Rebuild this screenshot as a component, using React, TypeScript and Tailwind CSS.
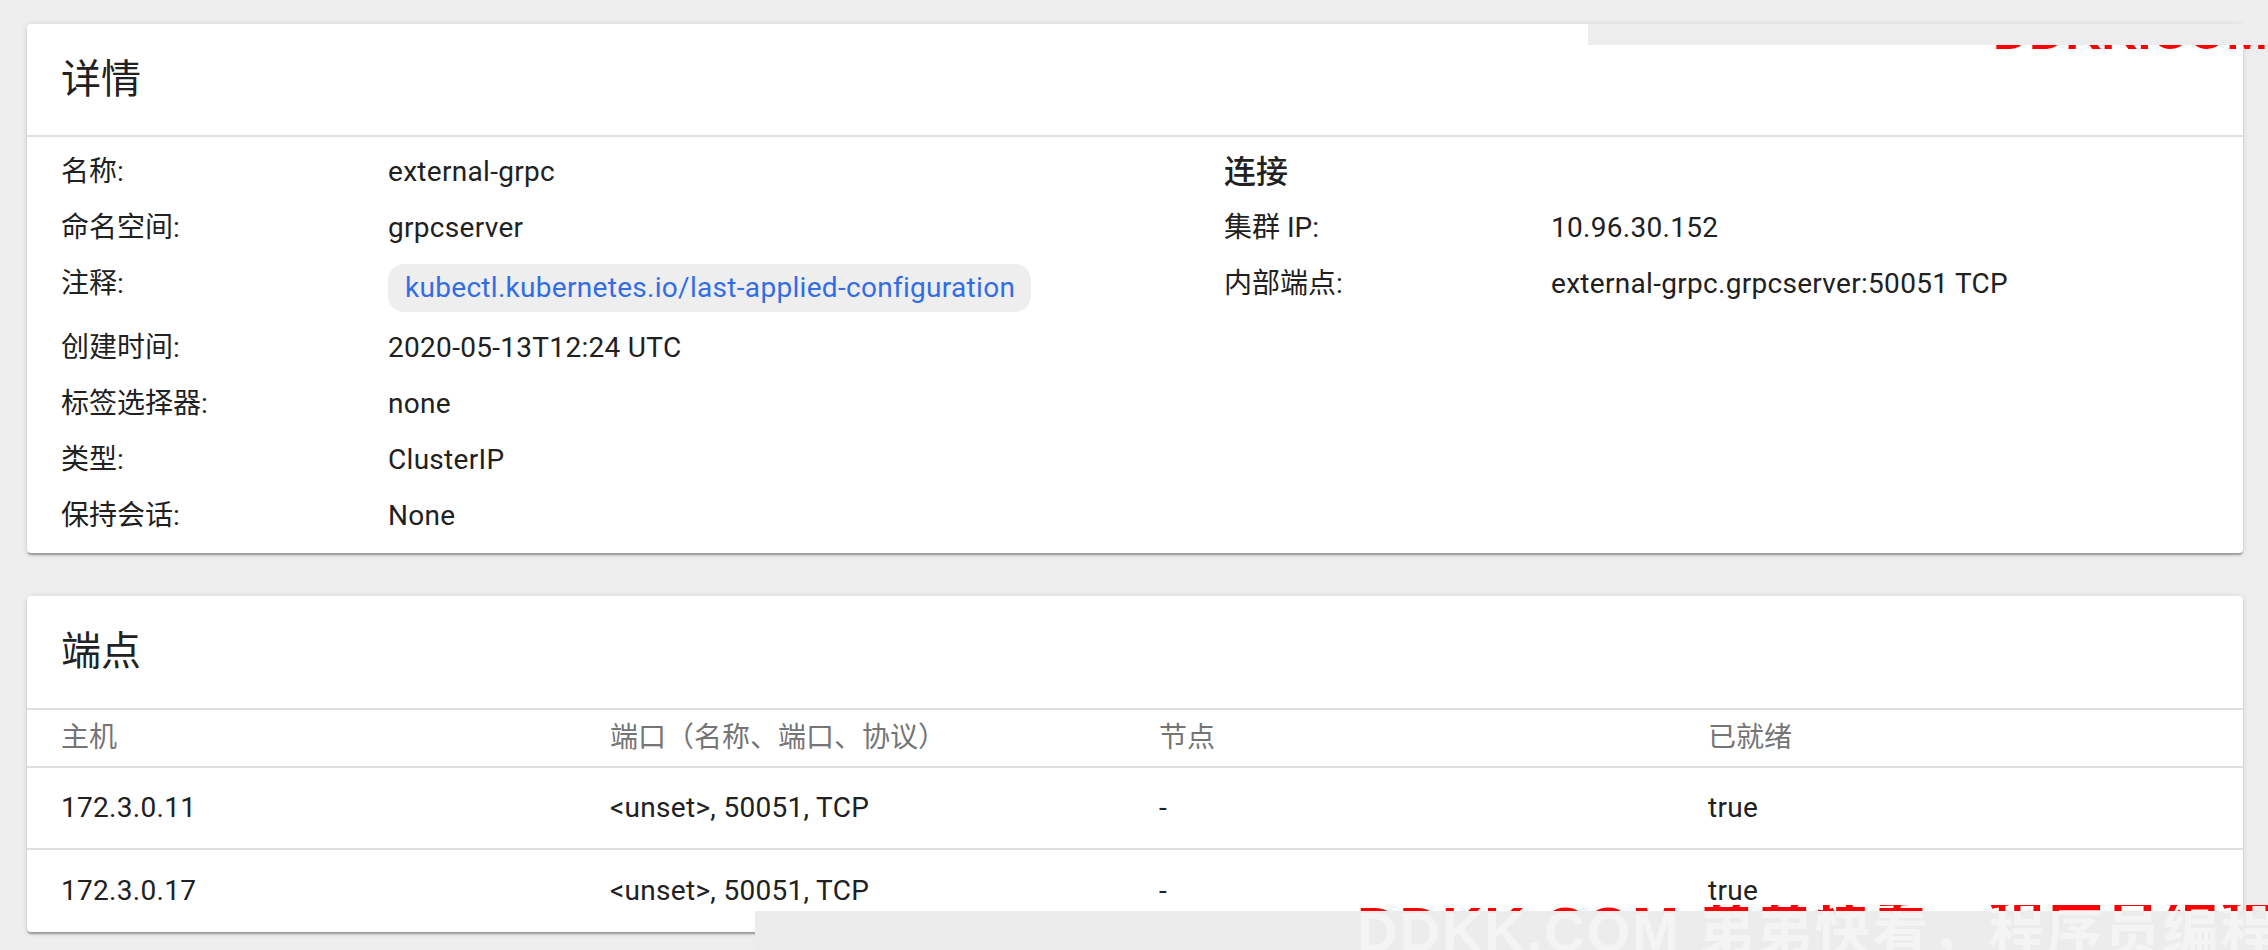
import React from "react";

const font = { fontFamily: "Roboto, 'Noto Sans CJK SC', 'Noto Sans', sans-serif" };

function Card({ title, headerH, children }: { title: string; headerH: string; children: React.ReactNode }) {
  return (
    <div className="bg-white rounded-[4px] shadow-[0_3px_2px_-1px_rgba(0,0,0,0.2),0_2px_2px_0_rgba(0,0,0,0.14),0_1px_6px_0_rgba(0,0,0,0.12)]">
      <div className={`${headerH} flex items-center pl-[34px] border-b-2 border-[#e0e0e0]`}>
        <span className="text-[40px] leading-[48px] text-[#212121]">{title}</span>
      </div>
      {children}
    </div>
  );
}

function Row({ label, children, labelW = "w-[327px]" }: { label: string; children: React.ReactNode; labelW?: string }) {
  return (
    <div className="flex items-start">
      <div className={`${labelW} shrink-0 text-[28px] leading-[40px] text-[#212121]`}>{label}</div>
      <div className="text-[28px] leading-[40px] tracking-[0.3px] text-[#212121]">{children}</div>
    </div>
  );
}

export default function App() {
  const headers = ["主机", "端口（名称、端口、协议）", "节点", "已就绪"];
  const rows = [
    ["172.3.0.11", "<unset>, 50051, TCP", "-", "true"],
    ["172.3.0.17", "<unset>, 50051, TCP", "-", "true"],
  ];
  return (
    <div className="relative h-[950px] overflow-hidden bg-[#eeeeee] pt-[24px] pl-[27px] pr-[25px]" style={font}>
      <div className="flex flex-col gap-[43px]">
        <Card title="详情" headerH="h-[113px]">
          <div className="flex pl-[34px] pt-[15px] pb-[17px]">
            <div className="w-[1163px] shrink-0 flex flex-col gap-[16px]">
              <Row label="名称:">external-grpc</Row>
              <Row label="命名空间:">grpcserver</Row>
              <Row label="注释:">
                <span className="inline-flex h-[48px] items-center rounded-[16px] bg-[#eeeeee] pl-[17px] pr-[16px] text-[#326de6]">
                  kubectl.kubernetes.io/last-applied-configuration
                </span>
              </Row>
              <Row label="创建时间:">2020-05-13T12:24 UTC</Row>
              <Row label="标签选择器:">none</Row>
              <Row label="类型:">ClusterIP</Row>
              <Row label="保持会话:">None</Row>
            </div>
            <div className="flex flex-col gap-[16px]">
              <div className="text-[32px] leading-[40px] font-medium text-[#212121]">连接</div>
              <Row label="集群 IP:">10.96.30.152</Row>
              <Row label="内部端点:">external-grpc.grpcserver:50051 TCP</Row>
            </div>
          </div>
        </Card>
        <Card title="端点" headerH="h-[114px]">
          <div className="grid grid-cols-[549px_549px_549px_1fr] h-[58px] items-center pl-[34px] border-b-2 border-[#e0e0e0]">
            {headers.map((h) => (
              <div key={h} className="text-[28px] leading-[40px] text-[#757575]">{h}</div>
            ))}
          </div>
          {rows.map((r, i) => (
            <div
              key={i}
              className={`grid grid-cols-[549px_549px_549px_1fr] h-[82px] items-center pl-[34px] ${i === 0 ? "border-b-2 border-[#e0e0e0]" : ""}`}
            >
              {r.map((c, j) => (
                <div key={j} className="text-[28px] leading-[40px] tracking-[0.3px] text-[#212121]">{c}</div>
              ))}
            </div>
          ))}
        </Card>
      </div>

      {/* top-right watermark remnants */}
      <div className="absolute left-[1588px] right-0 top-[24px] h-[21px] bg-[#ededed]" />
      <div className="absolute left-[1993px] right-0 top-[45px] h-[6px] overflow-hidden">
        <div className="-mt-[38px] whitespace-nowrap text-[50px] leading-[50px] font-bold text-[#ff0000]" style={{ fontFamily: "'Liberation Sans', Arial, sans-serif" }}>
          DDKK.COM
        </div>
      </div>

      {/* bottom watermark remnants */}
      <div className="absolute left-[755px] right-0 top-[911px] bottom-0 bg-[#ececec] overflow-hidden">
        <div className="ml-[602px] -mt-[7px] whitespace-nowrap text-[56px] leading-[56px] font-bold tracking-[2px] text-white/45" style={{ fontFamily: "'Liberation Sans', 'Noto Sans CJK SC', sans-serif" }}>
          DDKK.COM 弟弟快看，程序员编程资料站
        </div>
      </div>
      <div className="absolute left-[1357px] right-0 top-[905px] h-[6px] overflow-hidden">
        <div className="-mt-[6px] whitespace-nowrap text-[56px] leading-[56px] font-bold tracking-[2px] text-[#ff0000]" style={{ fontFamily: "'Liberation Sans', 'Noto Sans CJK SC', sans-serif" }}>
          DDKK.COM 弟弟快看，程序员编程资料站
        </div>
      </div>
    </div>
  );
}
